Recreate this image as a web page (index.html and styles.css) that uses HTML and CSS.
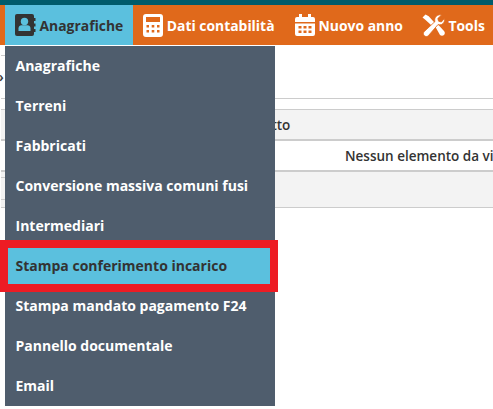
FILE: index.html
```html
<!DOCTYPE html>
<html lang="en">
<head>
    <meta charset="UTF-8">
    <meta name="viewport" content="width=device-width, initial-scale=1.0">
    <title>Anagrafiche</title>
    <link rel="stylesheet" href="styles.css">
</head>
<body>
    <div class="top-strip"></div>
    <nav class="navbar">
        <a class="nav-item active">
            <svg class="nav-icon" width="21" height="22" viewBox="0 0 21 22">
                <path d="M2 0h15a2 2 0 0 1 2 2v18a2 2 0 0 1-2 2H2a2 2 0 0 1-2-2V2a2 2 0 0 1 2-2z" fill="currentColor"/>
                <path d="M19 4h1.500v3H19zM19 9.500h1.500v3H19zM19 15h1.500v3H19z" fill="currentColor"/>
                <circle cx="9.500" cy="7.500" r="3.700" fill="#5bc0de"/>
                <path d="M3.500 17v-2.500c0-2 1.500-3.200 3-3.200h6c1.500 0 3 1.200 3 3.200V17z" fill="#5bc0de"/>
            </svg>
            Anagrafiche
        </a>
        <a class="nav-item">
            <svg class="nav-icon" width="20" height="23" viewBox="0 0 20 23">
                <path fill-rule="evenodd" fill="currentColor" d="M3 0h14a3 3 0 0 1 3 3v17a3 3 0 0 1-3 3H3a3 3 0 0 1-3-3V3a3 3 0 0 1 3-3zM3 3v5h14V3zM3.500 11v2.500H6V11zM8.700 11v2.500h2.600V11zM14 11v2.500h2.500V11zM3.500 16v2.500H6V16zM8.700 16v2.500h2.600V16zM14 16v2.500h2.500V16z"/>
            </svg>
            Dati contabilità
        </a>
        <a class="nav-item nav-item-year">
            <svg class="nav-icon" width="20" height="22" viewBox="0 0 20 22">
                <path fill-rule="evenodd" fill="currentColor" d="M4 0h3v3h6V0h3v3h2a2 2 0 0 1 2 2v3H0V5a2 2 0 0 1 2-2h2zM0 9.500h20V20a2 2 0 0 1-2 2H2a2 2 0 0 1-2-2zM3.500 12v2.500H6.500V12zM8.500 12v2.500h3V12zM13.500 12v2.500h3V12zM3.500 16.500V19H6.500v-2.500zM8.500 16.500V19h3v-2.500zM13.500 16.500V19h3v-2.500z"/>
            </svg>
            Nuovo anno
        </a>
        <a class="nav-item nav-item-tools">
            <svg class="nav-icon" width="23" height="23" viewBox="0 0 23 23">
                <path fill="currentColor" d="M13.500 13 16 10.500l6 6.500c1.100 1.200 1.100 2.900 0 4-1.100 1.100-2.900 1.100-4 0z"/>
                <path fill="currentColor" d="M.5 3.500 3.500.5l3.200 1.800 4.300 4.700 1.500 1.500-3 3L8 10 3 5.500z"/>
                <path fill="currentColor" stroke="#e0691b" stroke-width=".8" d="M22.500 4.500c.5 2.500-.5 5-3 6-1.200.5-2.500.4-3.500.1L6.500 21.500c-1.200 1.300-3 1.300-4.200.2-1.200-1.200-1.200-3 0-4.200L13 7.500c-.4-1.200-.4-2.500.2-3.700C14.300 1.300 17 .3 19.500 1l-3.700 3.500.8 2.700 2.700.8z"/>
            </svg>
            Tools
        </a>
    </nav>

    <div class="content">
        <div class="tab-stub"></div>
        <div class="breadcrumb">»</div>
        <div class="filter-line"></div>
        <div class="table-head">Soggetto</div>
        <div class="table-empty">Nessun elemento da visualizzare</div>
        <div class="table-foot"><div class="pager"></div></div>
    </div>

    <ul class="dropdown">
        <li>Anagrafiche</li>
        <li>Terreni</li>
        <li>Fabbricati</li>
        <li>Conversione massiva comuni fusi</li>
        <li>Intermediari</li>
        <li class="selected">Stampa conferimento incarico</li>
        <li>Stampa mandato pagamento F24</li>
        <li>Pannello documentale</li>
        <li>Email</li>
    </ul>
    <div class="highlight-box"></div>
</body>
</html>
```

FILE: styles.css
```css
html, body {
    height: 100%;
}
body {
    margin: 0;
    font-family: "Open Sans", sans-serif;
    font-size: 13.9px;
    color: #333;
    background: #fff;
    overflow: hidden;
    position: relative;
}
.top-strip {
    height: 5px;
    background-color: #005b6b;
}
.navbar {
    display: flex;
    height: 40px;
    padding-left: 5px;
    background-color: #e0691b;
}
.nav-item {
    display: flex;
    align-items: center;
    gap: 3.5px;
    padding: 0 10px;
    color: #fff;
    font-weight: 700;
    white-space: nowrap;
}
.nav-item.active {
    background-color: #5bc0de;
    color: #333;
}
.nav-item-year {
    margin-left: .5px;
}
.nav-item-tools {
    margin-left: -1px;
}
.nav-icon {
    flex: none;
}
.content {
    padding-left: 1px;
}
.tab-stub {
    width: 100px;
    margin-top: 10px;
    border-top: 1px solid #ccc;
}
.breadcrumb {
    height: 42px;
    margin-left: -5px;
    padding-top: 11px;
    box-sizing: border-box;
    font-weight: 600;
    line-height: 20px;
}
.filter-line {
    height: 10px;
    border-top: 1px solid #ccc;
}
.table-head {
    height: 29px;
    padding-left: 232px;
    border-top: 1px solid #ccc;
    border-bottom: 2px solid #ccc;
    background-color: #f3f3f3;
    font-size: 13.5px;
    font-weight: 600;
    line-height: 30px;
}
.table-empty {
    height: 29px;
    padding-left: 344px;
    font-size: 13.5px;
    font-weight: 600;
    line-height: 30px;
    white-space: nowrap;
}
.table-foot {
    height: 35px;
    border-top: 2px solid #ccc;
    border-bottom: 1px solid #ccc;
    background-color: #f3f3f3;
}
.pager {
    width: 100px;
    height: 23px;
    margin-top: 5px;
    box-sizing: border-box;
    border-top: 1px solid #ccc;
    border-bottom: 1px solid #ccc;
}
.dropdown {
    position: absolute;
    top: 46px;
    left: 5px;
    width: 270px;
    margin: 0;
    padding: 0;
    list-style: none;
    background-color: #4f5d6d;
}
.dropdown li {
    height: 40px;
    padding-left: 10.5px;
    color: #fff;
    font-size: 14px;
    font-weight: 700;
    line-height: 40px;
    white-space: nowrap;
}
.dropdown li.selected {
    background-color: #5bc0de;
    color: #333;
}
.highlight-box {
    position: absolute;
    top: 240px;
    left: 0;
    width: 278px;
    height: 52px;
    box-sizing: border-box;
    border: 8px solid #ed1c24;
}
```
